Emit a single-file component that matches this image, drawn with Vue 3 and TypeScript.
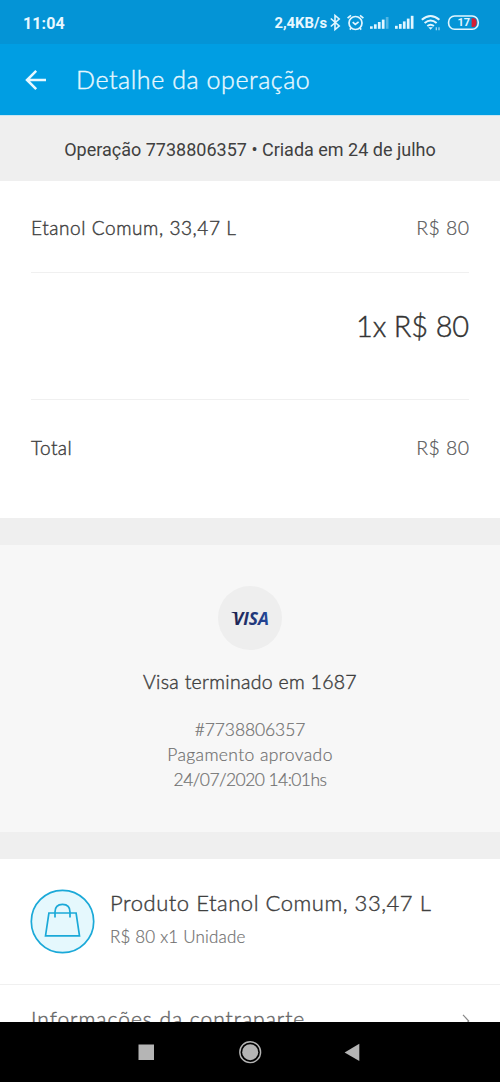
<script setup lang="ts">
interface Bars { heights: number[]; faded: number }

const operation = '7738806357'
const signals: Bars[] = [
  { heights: [2.5, 4.5, 6.8, 9.2, 11.8], faded: 4 },
  { heights: [3, 4.8, 7.4, 10.2, 13], faded: 5 },
]
</script>

<template>
  <div class="screen">
    <div class="status">
      <span class="clock">11:04</span>
      <span class="speed">2,4KB/s</span>
      <svg class="icons" width="152" height="24" viewBox="328 10 152 24" fill="none" stroke="#e2f6ff">
        <path d="M330.8 18.5 339.2 26 335 29.5V15.5L339.2 19 330.8 26.5" stroke-width="1.6" />
        <g stroke-width="1.7">
          <circle cx="355.5" cy="23" r="6.5" />
          <path d="M352.7 22.2 355.3 24.5 358.6 21.8M347.6 18.2 351 15.3M363.4 18.2 360 15.3M351.2 28 349.8 29.6M359.8 28 361.2 29.6" />
        </g>
        <g v-for="(signal, s) in signals" :key="s" stroke="none" fill="#e2f6ff">
          <rect
            v-for="(h, i) in signal.heights"
            :key="i"
            :x="370 + s * 25 + i * 3.95"
            :y="28.8 - h"
            width="2.7"
            :height="h"
            :opacity="i >= signal.faded ? 0.35 : 1"
          />
        </g>
        <g stroke-width="2">
          <path d="M421.8 19.8Q430.6 12.2 439.4 19.8M424.6 23Q430.6 18 436.6 23M427.3 26Q430.6 23.4 433.9 26" />
          <path d="M428.3 27.2H432.9L430.6 29.8Z" fill="#e2f6ff" stroke="none" />
          <path d="M436.3 27.2V30.2M439 27.2V30.2" stroke-width="1.2" opacity=".75" />
        </g>
        <rect x="448.6" y="16" width="29.6" height="13.2" rx="6" stroke-width="1.6" />
        <path d="M471.6 18.2H474Q476.6 18.8 476.6 22.5T474 27H471.6Z" fill="#d51e34" stroke="none" />
        <text x="463.7" y="26.4" text-anchor="middle" class="charge">17</text>
      </svg>
    </div>

    <header class="bar">
      <svg width="22" height="22" viewBox="0 0 22 22" fill="none" stroke="#e8f8ff" stroke-width="2.5">
        <path d="M21 11H2.5M11.2 1.8 2 11 11.2 20.2" />
      </svg>
      <h1>Detalhe da operação</h1>
    </header>

    <div class="created"><span>Operação {{ operation }} • Criada em 24 de julho</span></div>

    <section class="summary">
      <div class="line item"><span class="name">Etanol Comum, 33,47 L</span><span class="price">R$ 80</span></div>
      <div class="line installments"><span>1x R$ 80</span></div>
      <div class="line total"><span class="label">Total</span><span class="price">R$ 80</span></div>
    </section>

    <section class="payment">
      <div class="brand">
        <svg width="48" height="28" viewBox="-4 -5 48 28">
          <defs>
            <linearGradient id="visa-blue"><stop offset="0" stop-color="#20224e" /><stop offset="1" stop-color="#23479c" /></linearGradient>
          </defs>
          <text x="3" y="15.6" textLength="36" lengthAdjust="spacingAndGlyphs" fill="url(#visa-blue)">VISA</text>
          <path d="M1.5 3H6L7.4 6.4Q5.5 4.1 1.5 3.4Z" fill="#20224e" />
        </svg>
      </div>
      <h2>Visa terminado em 1687</h2>
      <p class="number">#{{ operation }}</p>
      <p class="state">Pagamento aprovado</p>
      <p class="date">24/07/2020 14:01hs</p>
    </section>

    <section class="product">
      <svg width="66" height="66" viewBox="0 0 66 66" fill="none" stroke="#1ba9d8" stroke-width="1.7">
        <circle cx="32.5" cy="32.5" r="31.2" fill="#e5f8fd" />
        <path d="M18.9 24H46.1L49.5 46.8H15.5ZM25 28.5V23Q25 15.3 32.5 15.3T40 23V28.5" />
      </svg>
      <div class="description">
        <h3>Produto Etanol Comum, 33,47 L</h3>
        <p>R$ 80 x1 Unidade</p>
      </div>
    </section>

    <div class="counterpart">
      <span>Informações da contraparte</span>
      <svg width="8" height="14" viewBox="0 0 8 14" fill="none" stroke="#888" stroke-width="1.2"><path d="M1 .8 6.7 7 1 13.2" /></svg>
    </div>

    <nav>
      <svg width="500" height="60" viewBox="0 0 500 60" fill="#b5b5b5">
        <rect x="138.5" y="22.5" width="15.5" height="15.5" />
        <circle cx="250.2" cy="30.2" r="8" />
        <circle cx="250.2" cy="30.2" r="10.4" fill="none" stroke="#b5b5b5" stroke-width="1.4" />
        <path d="M359.3 21.8V39L344.6 30.4Z" />
      </svg>
    </nav>
  </div>
</template>

<style>
body { margin: 0; }
</style>

<style scoped>
.screen { width: 500px; height: 1082px; display: flex; flex-direction: column; overflow: hidden; background: #fff; color: #404040; font-family: Lato, "Open Sans", sans-serif; }
.screen > * { box-sizing: border-box; flex-shrink: 0; }
h1, h2, h3, p { margin: 0; font-weight: 300; white-space: nowrap; }
h1, h2, h3, .name, .label, .installments, .counterpart span { font-weight: 300; -webkit-text-stroke: .4px currentColor; }
span { white-space: nowrap; }
.status { height: 44px; display: flex; align-items: center; padding: 2px 20px 0 23px; background: #0494d6; color: #e8f8ff; font-family: Roboto, sans-serif; font-weight: 700; }
.clock { font-size: 16px; letter-spacing: .1px; }
.speed { margin-left: auto; font-size: 14.8px; font-weight: 700; margin-right: 1px; }
.icons { margin-top: -2px; }
.charge { font: 700 11px Roboto, sans-serif; fill: #e2f6ff; stroke: none; }
.bar { height: 71px; display: flex; align-items: center; padding-left: 25px; gap: 29px; background: #009ee3; color: #e8f8ff; }
h1 { font-size: 25px; line-height: 30px; letter-spacing: .57px; padding-bottom: 2px; }
.created { height: 66px; display: flex; align-items: center; justify-content: center; padding-top: 1px; border-top: 1px solid #c8e5f1; background: #efefef; font-family: Roboto, sans-serif; font-size: 18px; }
.summary { height: 337px; padding: 0 31px; }
.line { display: flex; justify-content: space-between; align-items: center; box-sizing: border-box; font-size: 19px; }
.item { height: 92px; padding-top: 2px; border-bottom: 1px solid #f0f0f0; }
.name { letter-spacing: .58px; }
.label { letter-spacing: .4px; }
.installments { height: 127px; padding-bottom: 22px; justify-content: flex-end; border-bottom: 1px solid #f0f0f0; font-size: 29px; color: #333; letter-spacing: -.15px; }
.total { height: 95px; padding-bottom: 1px; }
.price { color: #555; font-weight: 300; font-size: 19.5px; letter-spacing: .4px; margin-right: -.4px; -webkit-text-stroke: .2px currentColor; }
.payment { height: 341px; border-top: 27px solid #efefef; border-bottom: 27px solid #efefef; padding-top: 41px; display: flex; flex-direction: column; align-items: center; background: #f7f7f7; }
.brand { width: 64px; height: 64px; border-radius: 50%; display: flex; align-items: center; justify-content: center; background: #eee; }
.brand text { font: italic 700 17px "Open Sans", sans-serif; }
h2 { margin-top: 19px; margin-bottom: 23px; font-size: 19.5px; line-height: 25px; letter-spacing: .3px; }
.payment p { font-size: 17.5px; line-height: 25px; font-weight: 300; color: #707070; -webkit-text-stroke: .2px currentColor; }
.number { letter-spacing: -.1px; }
.payment .state { letter-spacing: .38px; }
.payment .date { letter-spacing: -.57px; }
.product { height: 126px; display: flex; align-items: flex-start; padding: 30px 0 0 30px; gap: 14px; border-bottom: 1px solid #f0f0f0; }
h3 { font-size: 22px; line-height: 28px; letter-spacing: .54px; }
.description p { margin-top: 9px; font-size: 17px; line-height: 22px; font-weight: 300; color: #707070; letter-spacing: .18px; -webkit-text-stroke: .2px currentColor; }
.counterpart { height: 37px; padding: 21px 30px 0 31px; display: flex; align-items: flex-start; justify-content: space-between; overflow: hidden; font-size: 21px; line-height: 26px; color: #666; }
.counterpart span { letter-spacing: .98px; }
.counterpart svg { margin-top: 8px; }
nav { height: 60px; background: #000; }
nav svg { display: block; }
</style>
